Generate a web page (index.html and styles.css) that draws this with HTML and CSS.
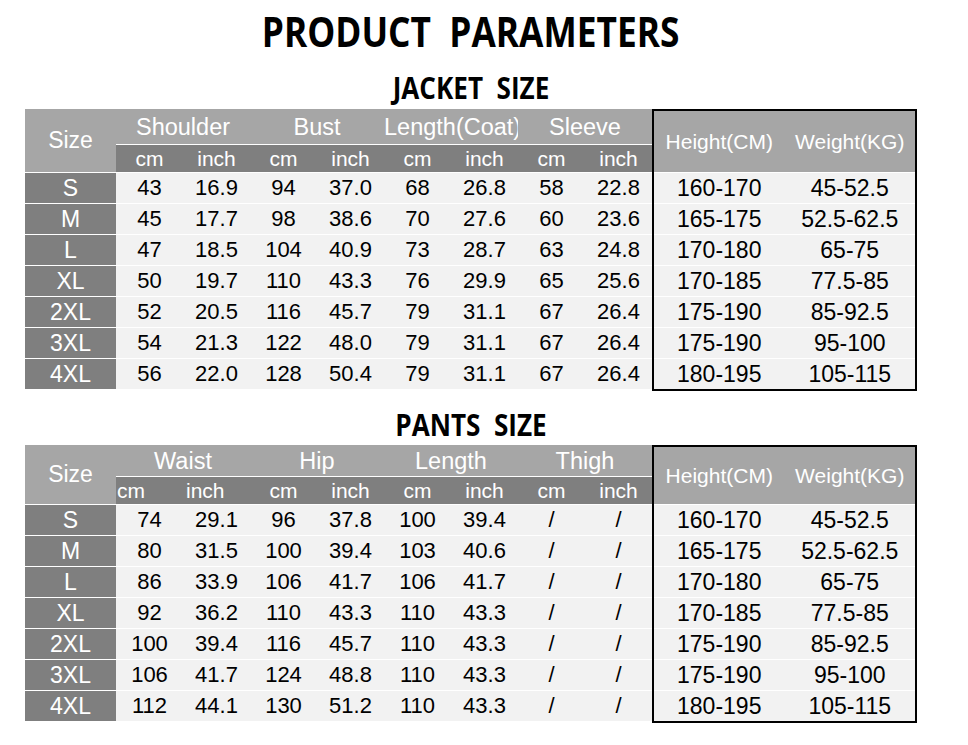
FILE: index.html
```html
<!DOCTYPE html>
<html>
<head>
<meta charset="utf-8">
<link rel="stylesheet" href="styles.css">
</head>
<body>
<div class="page">
  <h1 class="title"><span>PRODUCT&nbsp;&nbsp;PARAMETERS</span></h1>

  <h2 class="subtitle"><span>JACKET&nbsp;&nbsp;SIZE</span></h2>
  <div class="chart jacket">
    <div class="main">
      <div class="c size-head">Size</div>
      <div class="c group">Shoulder</div>
      <div class="c group">Bust</div>
      <div class="c group">Length(Coat)</div>
      <div class="c group">Sleeve</div>
      <div class="c sub">cm</div><div class="c sub">inch</div>
      <div class="c sub">cm</div><div class="c sub">inch</div>
      <div class="c sub">cm</div><div class="c sub">inch</div>
      <div class="c sub">cm</div><div class="c sub">inch</div>

      <div class="c lab">S</div><div class="c d">43</div><div class="c d">16.9</div><div class="c d">94</div><div class="c d">37.0</div><div class="c d">68</div><div class="c d">26.8</div><div class="c d">58</div><div class="c d">22.8</div>
      <div class="c lab">M</div><div class="c d">45</div><div class="c d">17.7</div><div class="c d">98</div><div class="c d">38.6</div><div class="c d">70</div><div class="c d">27.6</div><div class="c d">60</div><div class="c d">23.6</div>
      <div class="c lab">L</div><div class="c d">47</div><div class="c d">18.5</div><div class="c d">104</div><div class="c d">40.9</div><div class="c d">73</div><div class="c d">28.7</div><div class="c d">63</div><div class="c d">24.8</div>
      <div class="c lab">XL</div><div class="c d">50</div><div class="c d">19.7</div><div class="c d">110</div><div class="c d">43.3</div><div class="c d">76</div><div class="c d">29.9</div><div class="c d">65</div><div class="c d">25.6</div>
      <div class="c lab">2XL</div><div class="c d">52</div><div class="c d">20.5</div><div class="c d">116</div><div class="c d">45.7</div><div class="c d">79</div><div class="c d">31.1</div><div class="c d">67</div><div class="c d">26.4</div>
      <div class="c lab">3XL</div><div class="c d">54</div><div class="c d">21.3</div><div class="c d">122</div><div class="c d">48.0</div><div class="c d">79</div><div class="c d">31.1</div><div class="c d">67</div><div class="c d">26.4</div>
      <div class="c lab">4XL</div><div class="c d">56</div><div class="c d">22.0</div><div class="c d">128</div><div class="c d">50.4</div><div class="c d">79</div><div class="c d">31.1</div><div class="c d">67</div><div class="c d">26.4</div>
    </div>
    <div class="side">
      <div class="c shead">Height(CM)</div><div class="c shead">Weight(KG)</div>
      <div class="c sd">160-170</div><div class="c sd">45-52.5</div>
      <div class="c sd">165-175</div><div class="c sd">52.5-62.5</div>
      <div class="c sd">170-180</div><div class="c sd">65-75</div>
      <div class="c sd">170-185</div><div class="c sd">77.5-85</div>
      <div class="c sd">175-190</div><div class="c sd">85-92.5</div>
      <div class="c sd">175-190</div><div class="c sd">95-100</div>
      <div class="c sd">180-195</div><div class="c sd">105-115</div>
    </div>
  </div>

  <h2 class="subtitle pants-title"><span>PANTS&nbsp;&nbsp;SIZE</span></h2>
  <div class="chart pants">
    <div class="main">
      <div class="c size-head">Size</div>
      <div class="c group">Waist</div>
      <div class="c group">Hip</div>
      <div class="c group">Length</div>
      <div class="c group">Thigh</div>
      <div class="c sub sub-left">cm</div><div class="c sub sub-shift">inch</div>
      <div class="c sub">cm</div><div class="c sub">inch</div>
      <div class="c sub">cm</div><div class="c sub">inch</div>
      <div class="c sub">cm</div><div class="c sub">inch</div>

      <div class="c lab">S</div><div class="c d">74</div><div class="c d">29.1</div><div class="c d">96</div><div class="c d">37.8</div><div class="c d">100</div><div class="c d">39.4</div><div class="c d">/</div><div class="c d">/</div>
      <div class="c lab">M</div><div class="c d">80</div><div class="c d">31.5</div><div class="c d">100</div><div class="c d">39.4</div><div class="c d">103</div><div class="c d">40.6</div><div class="c d">/</div><div class="c d">/</div>
      <div class="c lab">L</div><div class="c d">86</div><div class="c d">33.9</div><div class="c d">106</div><div class="c d">41.7</div><div class="c d">106</div><div class="c d">41.7</div><div class="c d">/</div><div class="c d">/</div>
      <div class="c lab">XL</div><div class="c d">92</div><div class="c d">36.2</div><div class="c d">110</div><div class="c d">43.3</div><div class="c d">110</div><div class="c d">43.3</div><div class="c d">/</div><div class="c d">/</div>
      <div class="c lab">2XL</div><div class="c d">100</div><div class="c d">39.4</div><div class="c d">116</div><div class="c d">45.7</div><div class="c d">110</div><div class="c d">43.3</div><div class="c d">/</div><div class="c d">/</div>
      <div class="c lab">3XL</div><div class="c d">106</div><div class="c d">41.7</div><div class="c d">124</div><div class="c d">48.8</div><div class="c d">110</div><div class="c d">43.3</div><div class="c d">/</div><div class="c d">/</div>
      <div class="c lab">4XL</div><div class="c d">112</div><div class="c d">44.1</div><div class="c d">130</div><div class="c d">51.2</div><div class="c d">110</div><div class="c d">43.3</div><div class="c d">/</div><div class="c d">/</div>
    </div>
    <div class="side">
      <div class="c shead">Height(CM)</div><div class="c shead">Weight(KG)</div>
      <div class="c sd">160-170</div><div class="c sd">45-52.5</div>
      <div class="c sd">165-175</div><div class="c sd">52.5-62.5</div>
      <div class="c sd">170-180</div><div class="c sd">65-75</div>
      <div class="c sd">170-185</div><div class="c sd">77.5-85</div>
      <div class="c sd">175-190</div><div class="c sd">85-92.5</div>
      <div class="c sd">175-190</div><div class="c sd">95-100</div>
      <div class="c sd">180-195</div><div class="c sd">105-115</div>
    </div>
  </div>
</div>
</body>
</html>
```
FILE: styles.css
```css
* { box-sizing: border-box; }
html, body { margin: 0; padding: 0; background: #fff; }
body { font-family: "Liberation Sans", Arial, sans-serif; }

.page {
  width: 892px;
  margin-left: 25px;
}

.title, .subtitle {
  margin: 0;
  font-family: "Open Sans", "DejaVu Sans", sans-serif;
  font-weight: 700;
  color: #000;
  text-align: center;
  line-height: 1;
}
.title span, .subtitle span {
  display: inline-block;
  white-space: nowrap;
  transform: scaleX(0.84);
}
.subtitle span { transform: scaleX(0.87); }
.title {
  font-size: 42px;
  padding-top: 10px;
  height: 52px;
}
.subtitle {
  font-size: 30px;
  margin-top: 21px;
  height: 36px;
}
.pants-title {
  margin-top: 19px;
  height: 35px;
}

.chart {
  display: flex;
  align-items: flex-start;
}

.main {
  display: grid;
  grid-template-columns: 91px repeat(8, 67px);
  row-gap: 1px;
  background: #fff;
}
.jacket .main { grid-template-rows: 35px 27px repeat(7, 30px); }
.pants .main { grid-template-rows: 31px 27px repeat(7, 30px); }

.c {
  display: flex;
  align-items: center;
  justify-content: center;
  white-space: nowrap;
  overflow: hidden;
}

.size-head {
  grid-row: span 2;
  background: #a6a6a6;
  color: #fff;
  font-size: 23px;
}
.group {
  grid-column: span 2;
  background: #a6a6a6;
  color: #fff;
  font-size: 23.5px;
  padding-top: 2px;
  justify-content: safe center;
}
.sub {
  background: #7f7f7f;
  color: #fff;
  font-size: 21px;
}
.sub-left { justify-content: flex-start; padding-left: 1px; }
.sub-shift { justify-content: flex-start; padding-left: 3px; }

.lab {
  background: #7f7f7f;
  color: #fff;
  font-size: 23px;
}
.d {
  background: #f2f2f2;
  color: #000;
  font-size: 22px;
}

.side {
  width: 265px;
  border: 2px solid #000;
  display: grid;
  grid-template-columns: 1fr 1fr;
  row-gap: 1px;
  background: #fff;
}
.jacket .side { grid-template-rows: 61px repeat(7, 30px); }
.pants .side { grid-template-rows: 57px repeat(7, 30px); }

.shead {
  background: #a6a6a6;
  color: #fff;
  font-size: 21px;
}
.sd {
  background: #f2f2f2;
  color: #000;
  font-size: 23px;
}
```
